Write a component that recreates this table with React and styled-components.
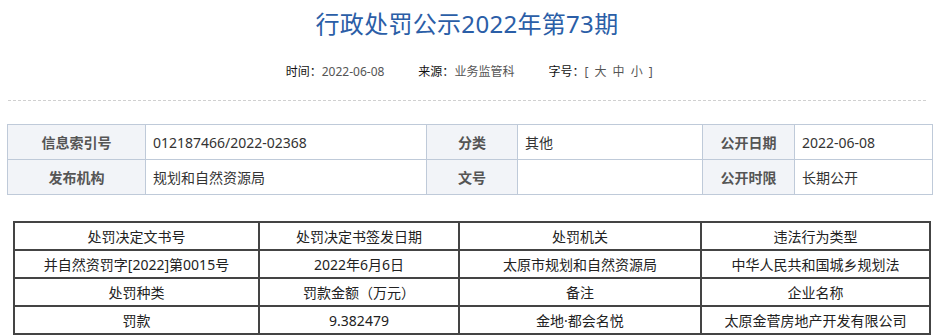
import React from "react";
import styled, { createGlobalStyle } from "styled-components";

const GlobalStyle = createGlobalStyle`
  body {
    margin: 0;
    background: #fff;
    font-family: "Noto Sans", "Noto Sans CJK SC", sans-serif;
  }
`;

const Page = styled.div`
  width: 934px;
  padding-top: 8px;
`;

const Title = styled.h1`
  margin: 0;
  height: 32px;
  line-height: 32px;
  text-align: center;
  font-size: 24px;
  font-weight: normal;
  color: #2b5ea7;
  letter-spacing: 0.3px;
`;

const Meta = styled.div`
  margin-top: 22px;
  display: flex;
  justify-content: center;
  gap: 34px;
  font-size: 12px;
  line-height: 20px;
  color: #111;
  padding-left: 6px;
`;

const MetaValue = styled.span`
  color: #555;
  letter-spacing: ${(p) => (p.$wide ? "1.5px" : "0")};
`;

const Divider = styled.div`
  margin: 18px 8px 0 8px;
  border-top: 1px dashed #d0d0d0;
`;

const Col = styled.col`
  width: ${(p) => (p.$w ? `${p.$w}px` : "auto")};
`;

const InfoTable = styled.table`
  margin: 23px 0 0 7px;
  width: 926px;
  border-collapse: collapse;
  table-layout: fixed;
  font-size: 14px;
  color: #333;

  td {
    border: 1px solid #bfcad9;
    height: 34px;
    padding: 0 7px;
  }
`;

const Label = styled.td`
  background: #f2f4f8;
  color: #555;
  font-weight: bold;
  text-align: center;
`;

const PunishTable = styled.table`
  margin: 26px 0 0 13px;
  width: 918px;
  border-collapse: collapse;
  table-layout: fixed;
  font-size: 14px;
  color: #222;

  td {
    border: 2px solid #444;
    height: 26px;
    padding: 0;
    text-align: center;
  }
`;

const info = [
  [
    ["信息索引号", "012187466/2022-02368"],
    ["分类", "其他"],
    ["公开日期", "2022-06-08"],
  ],
  [
    ["发布机构", "规划和自然资源局"],
    ["文号", ""],
    ["公开时限", "长期公开"],
  ],
];

const punish = [
  ["处罚决定文书号", "处罚决定书签发日期", "处罚机关", "违法行为类型"],
  ["并自然资罚字[2022]第0015号", "2022年6月6日", "太原市规划和自然资源局", "中华人民共和国城乡规划法"],
  ["处罚种类", "罚款金额（万元）", "备注", "企业名称"],
  ["罚款", "9.382479", "金地·都会名悦", "太原金菅房地产开发有限公司"],
];

export default function App() {
  return (
    <Page>
      <GlobalStyle />
      <Title>行政处罚公示2022年第73期</Title>
      <Meta>
        <span>
          时间：<MetaValue>2022-06-08</MetaValue>
        </span>
        <span>
          来源：<MetaValue>业务监管科</MetaValue>
        </span>
        <span>
          字号：<MetaValue $wide>[ 大 中 小 ]</MetaValue>
        </span>
      </Meta>
      <Divider />
      <InfoTable>
        <colgroup>
          <Col $w={138} />
          <Col $w={281} />
          <Col $w={91} />
          <Col $w={185} />
          <Col $w={92} />
          <Col />
        </colgroup>
        <tbody>
          {info.map((row, i) => (
            <tr key={i}>
              {row.map(([k, v]) => (
                <React.Fragment key={k}>
                  <Label>{k}</Label>
                  <td>{v}</td>
                </React.Fragment>
              ))}
            </tr>
          ))}
        </tbody>
      </InfoTable>
      <PunishTable>
        <colgroup>
          <Col $w={245} />
          <Col $w={200} />
          <Col $w={242} />
          <Col />
        </colgroup>
        <tbody>
          {punish.map((row, i) => (
            <tr key={i}>
              {row.map((c, j) => (
                <td key={j}>{c}</td>
              ))}
            </tr>
          ))}
        </tbody>
      </PunishTable>
    </Page>
  );
}
